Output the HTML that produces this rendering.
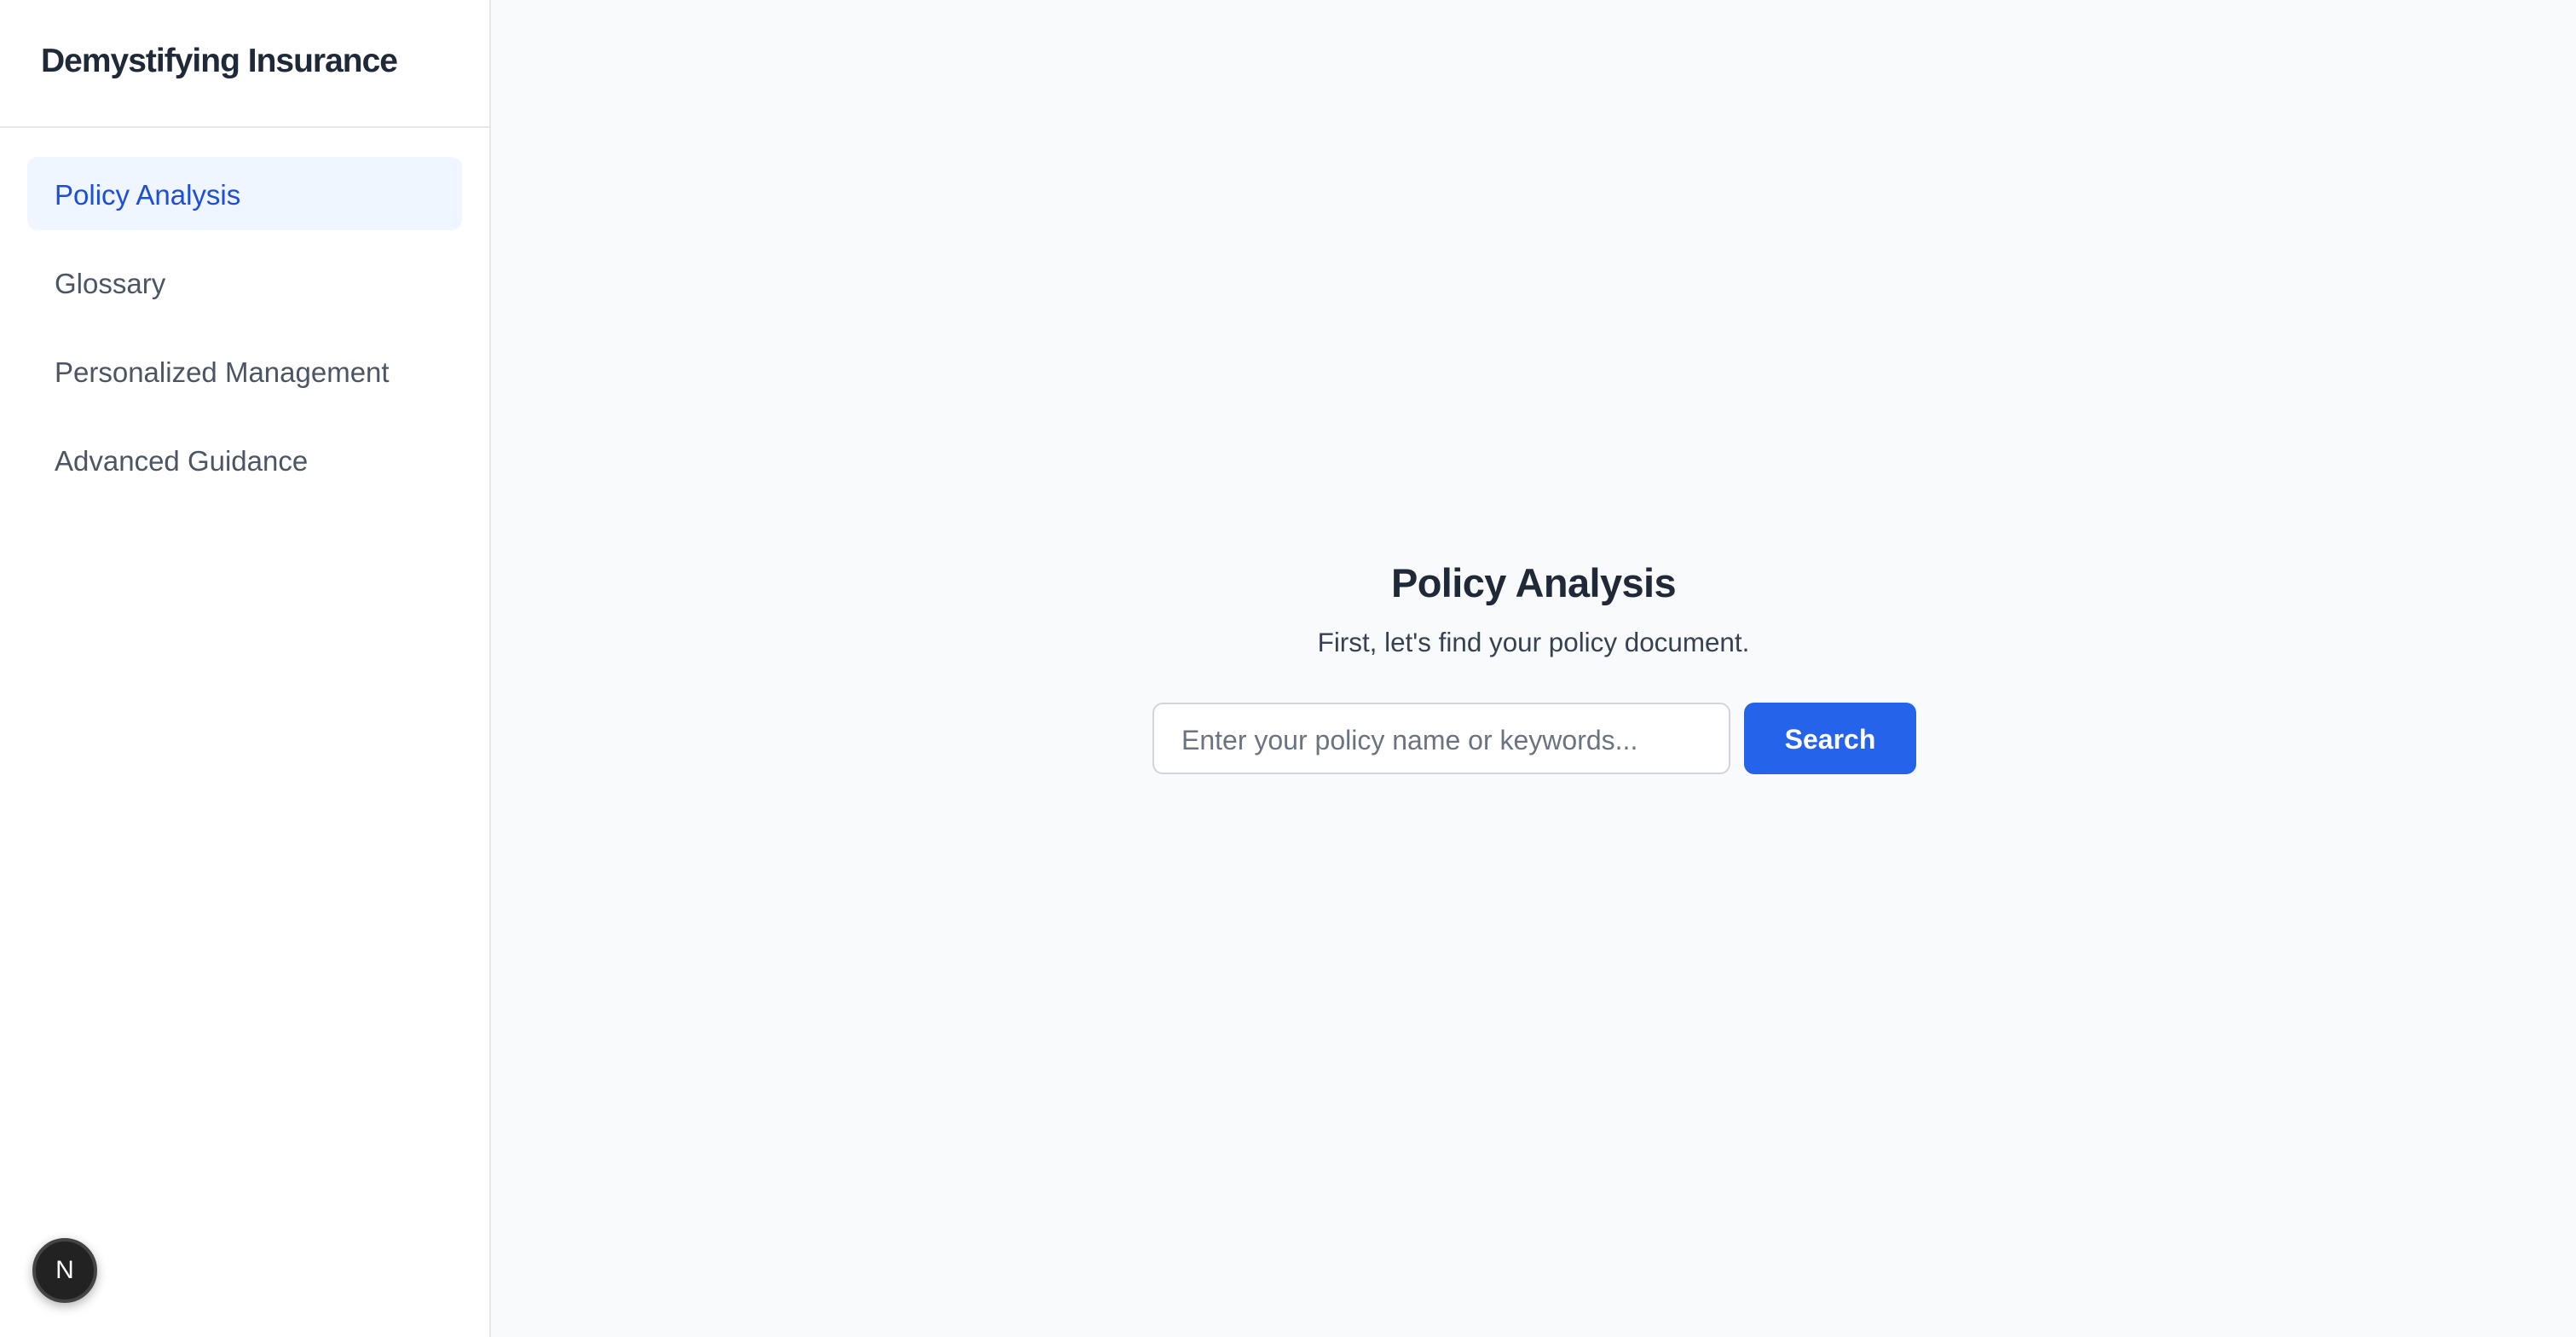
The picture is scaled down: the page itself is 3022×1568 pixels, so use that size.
<!DOCTYPE html>
<html><head><meta charset="utf-8"><style>
html{zoom:2}
*{box-sizing:border-box;margin:0;padding:0}
body{width:1511px;height:784px;overflow:hidden;font-family:"Liberation Sans",sans-serif;background:#f9fafb;position:relative}
.side{position:absolute;left:0;top:0;width:288px;height:784px;background:#fff;border-right:1px solid #e5e7eb}
.head{height:75px;border-bottom:1px solid #e5e7eb;padding:25px 24px 0}
.head h1{font-size:19.5px;font-weight:700;color:#1f2937;letter-spacing:-0.5px}
.nav{padding:17px 16px}
.nav div{height:43px;line-height:45px;padding-left:16px;font-size:16.5px;color:#4b5563;border-radius:6px;margin-bottom:9px}
.nav .act{background:#eff6ff;color:#1d4ed8}
.main{position:absolute;left:288px;right:0;top:0;height:784px;text-align:center}
.main h2{position:absolute;top:328px;left:0;right:0;font-size:23.5px;font-weight:700;color:#1f2937;letter-spacing:-0.3px}
.main p{position:absolute;top:368px;left:0;right:0;font-size:15.7px;color:#374151}
.row{position:absolute;top:412px;left:388px;display:flex;gap:8px}
.inp{width:339px;height:42px;border:1px solid #d1d5db;border-radius:6px;background:#fff;text-align:left;padding-left:16px;line-height:42px;font-size:16px;color:#6b7280}
.btn{width:101px;height:42px;background:#2563eb;border-radius:6px;color:#fff;font-weight:700;font-size:16px;line-height:43px}
.n{position:absolute;left:19px;top:726px;width:38px;height:38px;border-radius:50%;background:#222;border:2px solid #444;color:#fff;font-size:15px;line-height:34px;text-align:center;box-shadow:0 2px 6px rgba(0,0,0,.3)}
</style></head><body>
<div class="side"><div class="head"><h1>Demystifying Insurance</h1></div>
<div class="nav"><div class="act">Policy Analysis</div><div>Glossary</div><div>Personalized Management</div><div>Advanced Guidance</div></div></div>
<div class="main"><h2>Policy Analysis</h2><p>First, let's find your policy document.</p>
<div class="row"><div class="inp">Enter your policy name or keywords...</div><div class="btn">Search</div></div></div>
<div class="n">N</div>
</body></html>
